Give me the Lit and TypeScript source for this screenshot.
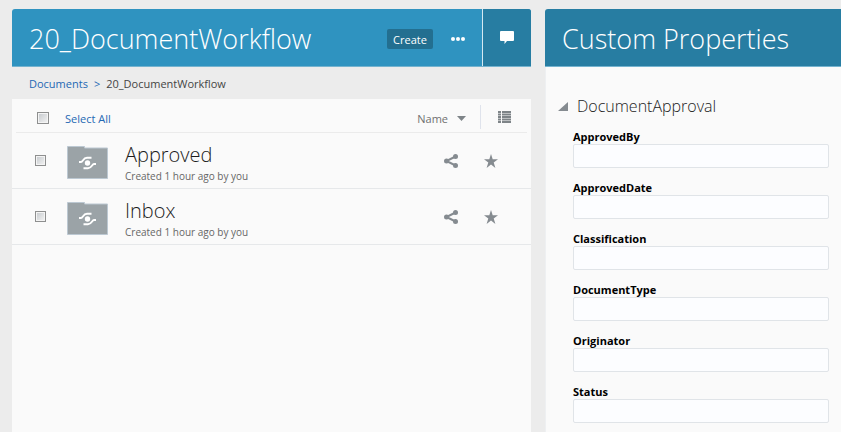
import { LitElement, html, css, svg } from "lit";
import { customElement, property, state } from "lit/decorators.js";

const shareGlyph = svg`<g fill="none" stroke="#858b90" stroke-width="2"><path d="M11.500 2.500L2.500 7l9 4.500"/></g><g fill="#858b90"><circle cx="11.500" cy="2.500" r="2.500"/><circle cx="2.500" cy="7" r="2.500"/><circle cx="11.500" cy="11.500" r="2.500"/></g>`;

@customElement("folder-row")
export class FolderRow extends LitElement {
  @property() name = "";
  @property() detail = "";

  static styles = css`
    :host { display: block; }
    .row {
      display: flex;
      align-items: center;
      height: 55px;
      padding: 0 33px 0 23px;
      border-bottom: 1px solid #e6e8ea;
    }
    .check {
      appearance: none;
      width: 11px;
      height: 11px;
      margin: 0 21px 0 0;
      flex: none;
      border: 1px solid #8e8f8f;
      background: linear-gradient(135deg, #c4c8cc, #f4f4f4);
      box-shadow: inset 0 0 0 1px #f4f4f4;
    }
    .check:checked { background: #2f93c0; }
    .folder { flex: none; margin: 4px 17px 0 0; }
    .text { flex: 1; min-width: 0; padding-top: 7px; }
    .name {
      display: block;
      font-size: 20px;
      line-height: 24px;
      font-weight: 300;
      color: #1c1c1c;
      text-decoration: none;
    }
    .detail { font-size: 10px; line-height: 18px; color: #666; }
    .actions { display: flex; gap: 26px; }
    .action {
      display: block;
      width: 14px;
      height: 14px;
      padding: 0;
      border: 0;
      background: none;
      cursor: pointer;
    }
    svg { display: block; }
  `;

  render() {
    return html`<div class="row">
      <input class="check" type="checkbox" aria-label="Select ${this.name}" />
      <svg class="folder" width="41" height="33" viewBox="0 0 41 33" aria-hidden="true">
        <path d="M.5.5h17v1.500h23v30.500H.5z" fill="#9ba3a7" stroke="#bcc8d2"/>
        <circle cx="20.500" cy="17" r="2.700" fill="#fff"/>
        <path d="M12 16h2C16 16 16 11.800 20 11.800h4.500M29 18h-2C25 18 25 22.200 21 22.200h-4.500" fill="none" stroke="#fff" stroke-width="1.900"/>
      </svg>
      <div class="text">
        <a class="name" href="#${this.name}">${this.name}</a>
        <div class="detail">${this.detail}</div>
      </div>
      <div class="actions">
        <button class="action" aria-label="Share ${this.name}"><svg width="14" height="14" viewBox="0 0 14 14">${shareGlyph}</svg></button>
        <button class="action" aria-label="Favorite ${this.name}"><svg width="14" height="14" viewBox="0 0 14 14"><path d="M7 0l1.700 5.200H14L9.700 8.400 11.400 14 7 10.600 2.600 14l1.700-5.600L0 5.200h5.300z" fill="#858b90"/></svg></button>
      </div>
    </div>`;
  }
}

@customElement("app-root")
export class AppRoot extends LitElement {
  @state() private open = true;

  private folders = [
    { name: "Approved", detail: "Created 1 hour ago by you" },
    { name: "Inbox", detail: "Created 1 hour ago by you" },
  ];
  private fields = ["ApprovedBy", "ApprovedDate", "Classification", "DocumentType", "Originator", "Status"];

  static styles = css`
    :host {
      display: block;
      box-sizing: border-box;
      min-height: 100vh;
      background: #ececec;
      font-family: "Open Sans", "Noto Sans", sans-serif;
      font-size: 11px;
    }
    .layout {
      display: grid;
      grid-template-columns: minmax(0, 1fr) 296px;
      column-gap: 14px;
      min-height: 100vh;
      box-sizing: border-box;
      padding: 9px 0 0 12px;
    }
    .pane { display: flex; flex-direction: column; min-width: 0; }
    .header {
      display: flex;
      height: 58px;
      flex: none;
      box-sizing: border-box;
      border-bottom: 1px solid #74b3cf;
      border-radius: 3px 3px 0 0;
      overflow: hidden;
      background: #2f93c0;
      color: #fff;
    }
    .header-side { background: #277da2; border-radius: 3px 0 0 0; }
    .title {
      flex: 1;
      margin: 0;
      padding-left: 17px;
      font-size: 27px;
      line-height: 60px;
      font-weight: 300;
      white-space: nowrap;
    }
    .tools { display: flex; align-items: center; gap: 18px; padding: 0 17px 0 0; }
    button { font-family: inherit; cursor: pointer; border: 0; padding: 0; background: none; }
    .create {
      width: 46px;
      height: 20px;
      margin-top: 3px;
      border-radius: 2px;
      background: #236f90;
      color: #fff;
      font-size: 11px;
      line-height: 22px;
    }
    .chat {
      width: 49px;
      box-sizing: border-box;
      border-left: 1px solid #d5e9f2;
      background: #277da2;
      display: flex;
      align-items: center;
      justify-content: center;
    }
    svg { display: block; }
    .more { margin-top: 3px; }
    .crumbs {
      display: flex;
      gap: 6px;
      height: 32px;
      padding-left: 17px;
      line-height: 34px;
      color: #444;
    }
    a { color: #2468b4; text-decoration: none; }
    .panel { flex: 1; background: #fafafa; }
    .toolbar {
      display: flex;
      align-items: center;
      height: 33px;
      margin: 0 4px;
      padding: 0 16px 0 21px;
      border-bottom: 1px solid #ebebeb;
    }
    .check {
      appearance: none;
      width: 12px;
      height: 12px;
      margin: 4px 16px 0 0;
      border: 1px solid #8e8f8f;
      background: linear-gradient(135deg, #c4c8cc, #f4f4f4);
      box-shadow: inset 0 0 0 1px #f4f4f4;
    }
    .check:checked { background: #2f93c0; }
    .select-all { flex: 1; color: #2468b4; padding-top: 5px; }
    .sort {
      display: flex;
      align-items: center;
      gap: 9px;
      padding-top: 5px;
      color: #707070;
      font-size: 11px;
    }
    .view {
      height: 24px;
      margin-left: 14px;
      margin-top: 3px;
      padding-left: 17px;
      border-left: 1px solid #dfe3ec;
    }
    .side { border-left: 1px solid #eef0f2; padding: 27px 12px 8px 12px; }
    .section { margin: 0; font-weight: 300; }
    .section-toggle {
      display: flex;
      align-items: center;
      gap: 9px;
      font-size: 16px;
      line-height: 24px;
      font-weight: 300;
      color: #222;
    }
    .fields { display: flex; flex-direction: column; gap: 13px; padding: 12px 0 0 15px; }
    .fields[hidden] { display: none; }
    .field { display: flex; flex-direction: column; }
    .field label { font-size: 11px; line-height: 14px; font-weight: 700; color: #000; }
    .field input {
      height: 24px;
      box-sizing: border-box;
      margin: 0;
      padding: 0 6px;
      border: 1px solid #e0e4e8;
      border-radius: 2px;
      background: #fcfdff;
      font: inherit;
    }
  `;

  render() {
    return html`<div class="layout">
      <main class="pane">
        <header class="header">
          <h1 class="title">20_DocumentWorkflow</h1>
          <div class="tools">
            <button class="create">Create</button>
            <button class="more" aria-label="More actions"><svg width="14" height="4" viewBox="0 0 14 4" fill="#fff"><circle cx="2" cy="2" r="2"/><circle cx="7" cy="2" r="2"/><circle cx="12" cy="2" r="2"/></svg></button>
          </div>
          <button class="chat" aria-label="Conversation"><svg width="14" height="13" viewBox="0 0 14 13"><path d="M1 0h12q1 0 1 1v8q0 1-1 1H7l-2.500 3V10H1Q0 10 0 9V1q0-1 1-1z" fill="#fff"/></svg></button>
        </header>
        <nav class="crumbs" aria-label="Breadcrumb"><a href="#documents">Documents</a><a href="#documents" aria-hidden="true">&gt;</a><span>20_DocumentWorkflow</span></nav>
        <section class="panel">
          <div class="toolbar">
            <input id="all" class="check" type="checkbox" />
            <label class="select-all" for="all">Select All</label>
            <button class="sort">Name<svg width="9" height="5" viewBox="0 0 9 5"><path d="M0 0h9L4.500 5z" fill="#7e8488"/></svg></button>
            <button class="view" aria-label="List view"><svg width="13" height="12" viewBox="0 0 13 12"><path d="M0 1h3M4 1h9M0 3.500h3M4 3.500h9M0 6h3M4 6h9M0 8.500h3M4 8.500h9M0 11h3M4 11h9" stroke="#7e8488" stroke-width="1.800"/></svg></button>
          </div>
          ${this.folders.map((f) => html`<folder-row name=${f.name} detail=${f.detail}></folder-row>`)}
        </section>
      </main>
      <aside class="pane">
        <header class="header header-side"><h2 class="title">Custom Properties</h2></header>
        <section class="panel side">
          <h3 class="section">
            <button class="section-toggle" aria-expanded=${this.open} @click=${() => (this.open = !this.open)}>
              <svg width="10" height="9" viewBox="0 0 10 9"><path d="M10 0v9H0z" fill="#858b90"/></svg>DocumentApproval
            </button>
          </h3>
          <div class="fields" ?hidden=${!this.open}>
            ${this.fields.map((f) => html`<div class="field"><label for=${f}>${f}</label><input id=${f} type="text" /></div>`)}
          </div>
        </section>
      </aside>
    </div>`;
  }
}
